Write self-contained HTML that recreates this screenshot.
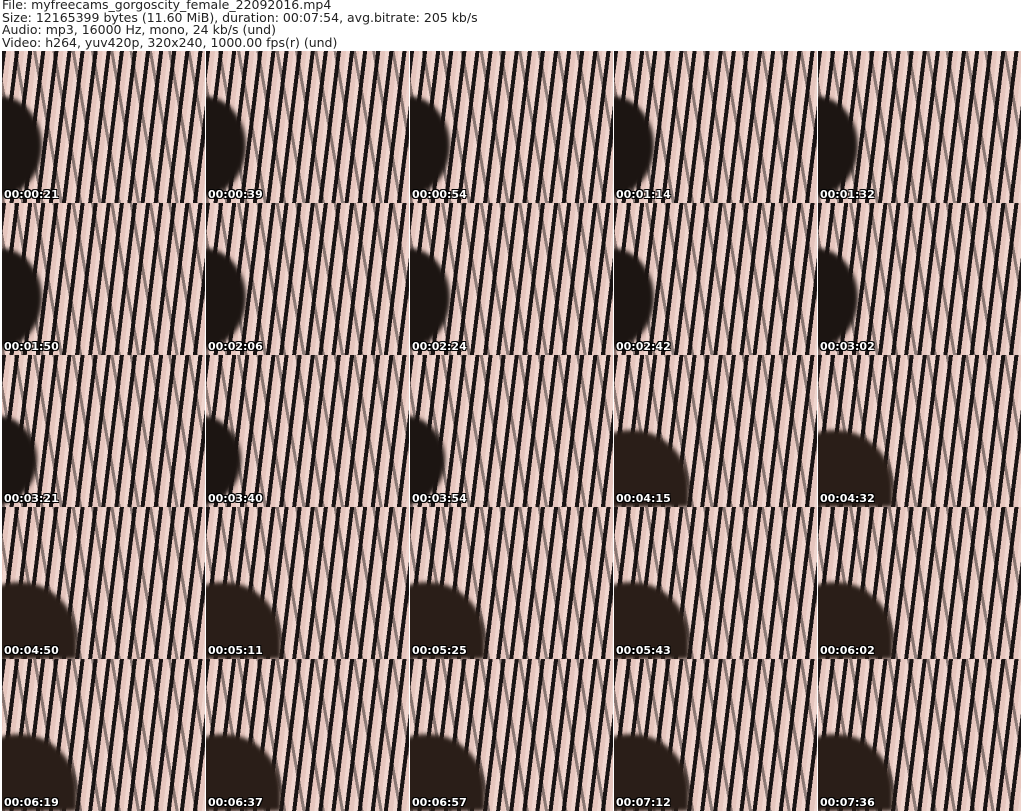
<!DOCTYPE html>
<html style="height:811px;overflow:hidden"><head><meta charset="utf-8"><style>
html,body{margin:0;width:1024px;height:811px;max-height:811px;overflow:hidden}
body{background:#fff;position:relative;font-family:"DejaVu Sans","Liberation Sans",sans-serif}
.h{position:absolute;left:2px;top:-1px;font-size:12.5px;line-height:12.5px;color:#222;white-space:pre}
#g{position:absolute;left:0;top:0;width:1024px;height:811px;overflow:hidden}
.c{position:absolute;width:203px;height:152px;overflow:hidden;background:#e9cbc3}
.z{position:absolute;left:0;top:0;width:203px;height:152px;background:repeating-linear-gradient(97deg,#1a1414 0 4px,#e6c6be 4px 9px,#f0d6cf 9px 13px);}
.z2{position:absolute;left:0;top:0;width:203px;height:152px;background:repeating-linear-gradient(80deg,rgba(20,15,15,.45) 0 3px,transparent 3px 19px);}
.hair{position:absolute;border-radius:50%;background:#1c1512;filter:blur(2px)}
.t{position:absolute;left:2px;bottom:2px;color:#fff;font-weight:bold;font-size:11px;line-height:12px;text-shadow:1px 1px 0 #000,-1px -1px 0 #000,1px -1px 0 #000,-1px 1px 0 #000}
</style></head><body>
<div class="h">File: myfreecams_gorgoscity_female_22092016.mp4
Size: 12165399 bytes (11.60 MiB), duration: 00:07:54, avg.bitrate: 205 kb/s
Audio: mp3, 16000 Hz, mono, 24 kb/s (und)
Video: h264, yuv420p, 320x240, 1000.00 fps(r) (und)</div>
<div id="g"></div>
<script>
var ts=["00:00:21","00:00:39","00:00:54","00:01:14","00:01:32","00:01:50","00:02:06","00:02:24","00:02:42","00:03:02","00:03:21","00:03:40","00:03:54","00:04:15","00:04:32","00:04:50","00:05:11","00:05:25","00:05:43","00:06:02","00:06:19","00:06:37","00:06:57","00:07:12","00:07:36"];
var h="";
for(var i=0;i<25;i++){var r=Math.floor(i/5),c=i%5;
var hs=r<2?'left:-45px;top:45px;width:85px;height:100px':(r==2&&c<3?'left:-50px;top:60px;width:85px;height:90px':'left:-40px;top:75px;width:115px;height:77px;border-radius:60px 60px 0 0;background:#2a1e18');
h+='<div class="c" style="left:'+(2+204*c)+'px;top:'+(51+152*r)+'px"><div class="z"></div><div class="z2"></div><div class="hair" style="'+hs+'"></div><div class="t">'+ts[i]+'</div></div>';}
document.getElementById("g").innerHTML=h;
</script>
</body></html>
